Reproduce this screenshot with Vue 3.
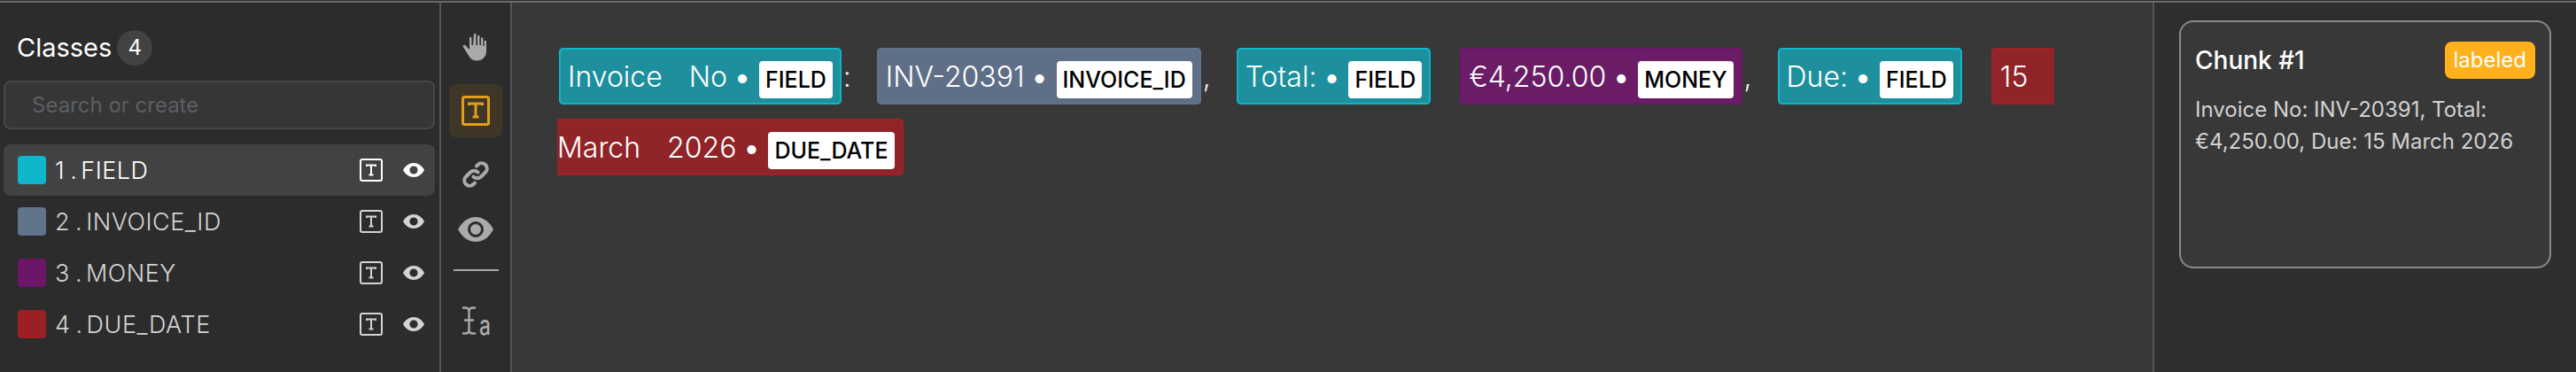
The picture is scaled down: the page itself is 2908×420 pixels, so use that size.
<template>
  <div class="app">
    <aside class="classes">
      <div class="classes-head">
        <span class="classes-title">Classes</span>
        <span class="count">{{ classes.length }}</span>
      </div>
      <input class="search" type="text" placeholder="Search or create" />
      <ul class="class-list">
        <li v-for="(c, i) in classes" :key="c.name" class="class-row" :class="{ active: i === 0 }">
          <span class="swatch" :class="c.cls"></span>
          <span class="class-num">{{ i + 1 }}</span>
          <span class="class-dot">.</span>
          <span class="class-name">{{ c.name }}</span>
          <svg class="row-t" viewBox="0 0 26 26" fill="none" stroke="currentColor">
            <rect x="1" y="1" width="24" height="24" rx="2" stroke-width="2" />
            <path d="M8 9V7.500h10V9M13 7.500v11M10.500 18.500h5" stroke-width="2" />
          </svg>
          <svg class="row-eye" viewBox="0 0 24 16">
            <path fill="currentColor" fill-rule="evenodd" d="M12 0c5 0 9.400 3.200 12 8-2.600 4.800-7 8-12 8S2.600 12.800 0 8c2.600-4.800 7-8 12-8zm0 3.400a4.600 4.600 0 1 0 0 9.200 4.600 4.600 0 0 0 0-9.200z" />
          </svg>
        </li>
      </ul>
    </aside>

    <nav class="tools">
      <button class="tool tool-hand" type="button">
        <svg width="30" height="32" viewBox="0 0 30 32" fill="#aaa">
          <path d="M13 1h2.400v13H17V3h2.400v11H21V5.500h2.400V15h1.300V9h2.300v12c0 6-4.500 10.500-10.500 10.500-4.500 0-7.500-2-10-6.500L.6 15.500c-.6-1.200 1.400-2.600 2.600-1.400L8 19V5h2.400v9H12L13 1z" />
        </svg>
      </button>
      <button class="tool tool-active" type="button">
        <svg width="32" height="34" viewBox="0 0 32 34" fill="none" stroke="#e09e1c">
          <rect x="1.500" y="1.500" width="29" height="31" rx="2" stroke-width="3" />
          <path d="M8.500 11V9h15v2M16 9v15M12.500 24h7" stroke-width="3" />
        </svg>
      </button>
      <button class="tool tool-link" type="button">
        <svg width="30" height="30" viewBox="0 0 30 30" fill="none" stroke="#aaa" stroke-width="4" stroke-linecap="round">
          <path d="M12.500 17.500a6 6 0 0 0 8.500 0l5-5a6 6 0 0 0-8.500-8.500l-1.500 1.500" />
          <path d="M17.500 12.500a6 6 0 0 0-8.500 0l-5 5a6 6 0 0 0 8.500 8.500l1.500-1.500" />
        </svg>
      </button>
      <button class="tool tool-eye" type="button">
        <svg width="40" height="28" viewBox="0 0 40 28">
          <path fill="#aaa" d="M20 0c8.500 0 15.500 5.500 20 14-4.500 8.500-11.500 14-20 14S4.500 22.500 0 14C4.500 5.500 11.500 0 20 0z" />
          <circle cx="20" cy="14" r="7.500" fill="#aaa" stroke="#2c2c2c" stroke-width="3" />
        </svg>
      </button>
      <hr class="tool-sep" />
      <button class="tool tool-case" type="button">
        <svg class="case-icon" width="33" height="32" viewBox="0 0 33 32" fill="none" stroke="#aaa" stroke-width="2.400">
          <path d="M1 1.500h3.500c2.500 0 3.500 1 4 3 .5-2 1.500-3 4-3H16M8.500 4.500v23M3 15.500h11M1 30.500h3.500c2.500 0 3.500-1 4-3 .5 2 1.500 3 4 3H16" />
          <text class="case-a" x="20" y="31.500" textLength="13" lengthAdjust="spacingAndGlyphs" fill="#aaa" stroke="none">a</text>
        </svg>
      </button>
    </nav>

    <main class="doc">
      <p class="doc-text">
        <template v-for="(seg, i) in segments" :key="i">
          <span v-if="seg.label" class="chip" :class="[seg.cls, { gap: seg.gap }]">
            <template v-for="(w, j) in seg.words" :key="j">
              <span class="word" :class="{ spaced: j < seg.words.length - 1 }">{{ w }}</span><wbr />
            </template>
            <span class="bullet">•</span>
            <span class="label">{{ seg.label }}</span>
          </span>
          <span v-else class="word punct">{{ seg.words[0] }}</span><wbr />
        </template>
      </p>
    </main>

    <aside class="chunks">
      <section class="card">
        <div class="card-head">
          <span class="card-title">Chunk #1</span>
          <span class="status">labeled</span>
        </div>
        <p class="card-body">Invoice No: INV-20391, Total: €4,250.00, Due: 15 March 2026</p>
      </section>
    </aside>
  </div>
</template>

<script setup>
const classes = [
  { name: 'FIELD', cls: 'c-field' },
  { name: 'INVOICE_ID', cls: 'c-invoice' },
  { name: 'MONEY', cls: 'c-money' },
  { name: 'DUE_DATE', cls: 'c-due' }
]

const segments = [
  { words: ['Invoice', 'No'], label: 'FIELD', cls: 'c-field' },
  { words: [':'] },
  { words: ['INV-20391'], label: 'INVOICE_ID', cls: 'c-invoice' },
  { words: [','] },
  { words: ['Total:'], label: 'FIELD', cls: 'c-field', gap: true },
  { words: ['€4,250.00'], label: 'MONEY', cls: 'c-money' },
  { words: [','] },
  { words: ['Due:'], label: 'FIELD', cls: 'c-field', gap: true },
  { words: ['15', 'March', '2026'], label: 'DUE_DATE', cls: 'c-due' }
]
</script>

<style scoped>
.app {
  display: flex;
  height: 417px;
  border-top: 2px solid #6a6a6a;
  margin-top: 1px;
  font-family: Inter, "Noto Sans", sans-serif;
  color: #fff;
}

.classes {
  width: 497px;
  flex-shrink: 0;
  box-sizing: border-box;
  padding: 0 6px 0 4px;
  background: #2c2c2c;
}

.classes-head {
  display: flex;
  align-items: center;
  gap: 6px;
  height: 40px;
  margin-top: 31px;
  padding-left: 15px;
}

.classes-title {
  font-size: 29px;
  line-height: 40px;
}

.count {
  width: 40px;
  height: 40px;
  border-radius: 50%;
  background: #424242;
  font-size: 24px;
  line-height: 40px;
  text-align: center;
}

.search {
  display: block;
  width: 100%;
  height: 55px;
  box-sizing: border-box;
  margin: 17px 0 0;
  padding: 0 30px;
  border: 2px solid #474747;
  border-radius: 8px;
  outline: none;
  background: #363636;
  color: #fff;
  font-family: inherit;
  font-size: 24px;
}

.search::placeholder {
  color: #5c5f64;
}

.class-list {
  margin: 17px 0 0;
  padding: 0;
  list-style: none;
}

.class-row {
  display: flex;
  align-items: center;
  height: 58px;
  padding: 0 12px 0 16px;
  border-radius: 8px;
  color: #d4d4d4;
  font-size: 27px;
  font-weight: 300;
  letter-spacing: 0.5px;
}

.class-row.active {
  background: #424242;
  color: #fff;
}

.swatch {
  width: 32px;
  height: 32px;
  flex-shrink: 0;
  margin-right: 10px;
  border-radius: 4px;
}

.swatch.c-field { background: #0fb5c9; }
.swatch.c-invoice { background: #62738c; }
.swatch.c-money { background: #6b1668; }
.swatch.c-due { background: #9b2024; }

.class-dot {
  margin: 0 4px 0 6px;
}

.class-name {
  flex: 1;
}

.row-t {
  width: 26px;
  height: 26px;
  margin-right: 23px;
}

.row-eye {
  width: 24px;
  height: 16px;
}

.tools {
  width: 82px;
  flex-shrink: 0;
  box-sizing: border-box;
  display: flex;
  flex-direction: column;
  align-items: center;
  border-left: 2px solid #565656;
  border-right: 2px solid #565656;
  margin-left: -1px;
  background: #2c2c2c;
}

.tool {
  display: flex;
  align-items: center;
  justify-content: center;
  width: 60px;
  padding: 0;
  border: 0;
  border-radius: 8px;
  background: none;
}

.tool-hand {
  height: 32px;
  margin-top: 34px;
}

.tool-active {
  height: 60px;
  margin-top: 26px;
  background: #3f3628;
}

.tool-link {
  height: 30px;
  margin-top: 27px;
}

.tool-eye {
  height: 28px;
  margin-top: 33px;
}

.tool-sep {
  width: 51px;
  height: 2px;
  margin: 31px 0 0;
  border: 0;
  background: #aaa;
}

.tool-case {
  height: 32px;
  margin-top: 40px;
}

.case-icon {
  overflow: visible;
}

.case-a {
  font-family: Inter, sans-serif;
  font-size: 31px;
  font-weight: 500;
}

.doc {
  flex: 1;
  min-width: 0;
  box-sizing: border-box;
  padding: 44px 52px 0 51px;
  background: #383838;
}

.doc-text {
  margin: 0;
  font-size: 32px;
  font-weight: 300;
  line-height: 80px;
  color: #f2f2f2;
}

.word.spaced {
  padding-right: 30px;
}

.word.punct {
  padding-right: 27px;
}

.chip {
  margin: 0 2px;
  padding: 11px 8px 10px;
  border: 2px solid;
  border-radius: 5px;
  color: #fff;
}

.chip.gap {
  margin-right: 31px;
}

.chip.c-field { background: #1e8f9c; border-color: #0fb5c9; }
.chip.c-invoice { background: #5f6f87; border-color: #62738c; }
.chip.c-money { background: #6b1c66; border-color: #6b1668; }
.chip.c-due { background: #912428; border-color: #a32025; }

.bullet {
  margin: 0 10px 0 8px;
  font-weight: 400;
}

.label {
  display: inline-block;
  height: 42px;
  padding: 0 7px;
  border-radius: 4px;
  background: #fff;
  color: #000;
  font-size: 25px;
  font-weight: 500;
  line-height: 42px;
  vertical-align: -1px;
}

.chunks {
  width: 478px;
  flex-shrink: 0;
  box-sizing: border-box;
  padding: 20px 28px 0 28px;
  border-left: 2px solid #565656;
  background: #2e2e2e;
}

.card {
  height: 280px;
  box-sizing: border-box;
  padding: 22px 16px 0 16px;
  border: 2px solid #8a8a8a;
  border-radius: 16px;
  background: #383838;
}

.card-head {
  display: flex;
  align-items: center;
  justify-content: space-between;
  height: 42px;
}

.card-title {
  font-size: 28px;
  font-weight: 500;
}

.status {
  height: 42px;
  padding: 0 10px;
  border-radius: 8px;
  background: #ffb01a;
  font-size: 24px;
  line-height: 42px;
}

.card-body {
  margin: 17px 0 0;
  color: #d2d2d2;
  font-size: 24px;
  line-height: 36px;
}
</style>

<style>
html, body {
  background: #2c2c2c;
}
</style>
